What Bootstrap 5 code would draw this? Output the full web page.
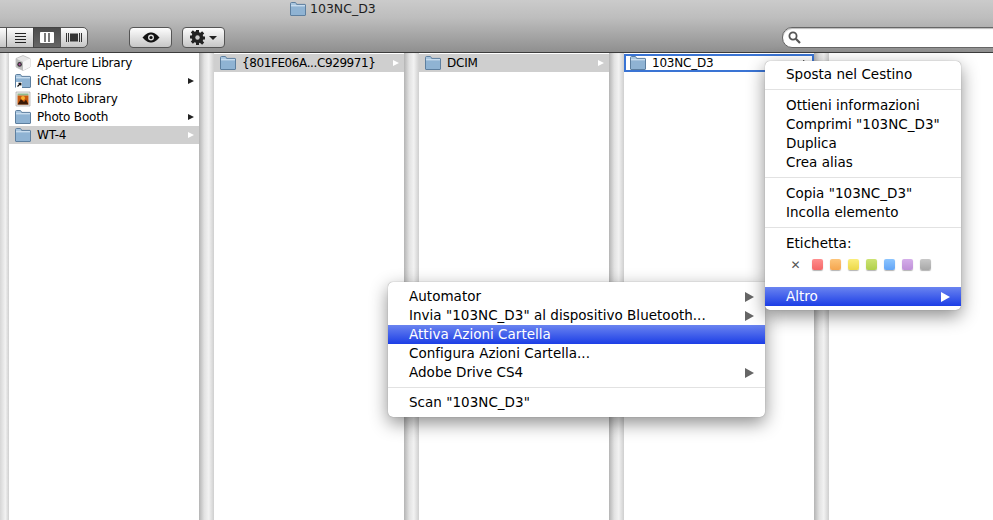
<!DOCTYPE html>
<html lang="it">
<head>
<meta charset="utf-8">
<title>103NC_D3</title>
<link href="https://cdn.jsdelivr.net/npm/bootstrap@5.3.0/dist/css/bootstrap.min.css" rel="stylesheet">
<style>
html,body{height:100%;overflow:hidden}
body{width:993px;height:520px;background:#fff;font-family:"DejaVu Sans","Liberation Sans",sans-serif;font-size:12px;color:#000;position:relative}
.tbar{height:53px;background:linear-gradient(#cbcbcb,#bdbdbd 35%,#8f8f8f);border-bottom:1px solid #3c3c3c;flex:none}
.wtitle{height:17px;padding-left:290px;font-size:12.5px;line-height:17px;color:#1c1c1c;gap:4px}
.wtools{padding-top:10px;height:35px}
.seg{margin-left:-22px;margin-right:41px;height:21px}
.seg .btn,.tool{height:21px;padding:0;border:1px solid #555;border-radius:0;background:linear-gradient(#fdfdfd,#c6c6c6);display:flex;align-items:center;justify-content:center}
.seg .btn{width:28px}
.seg .btn:first-child{width:29px}
.seg .btn:last-child{border-radius:0 5px 5px 0;width:28px}
.seg .btn.on{background:linear-gradient(#4b4b4b,#666);border-color:#444}
.tool{border-radius:4px;width:43px}
.tool-gear{margin-left:10px;gap:4px}
.caretd{width:0;height:0;border:4px solid transparent;border-top:4px solid #222;border-bottom:0}
.srch{width:240px;height:21px;margin-left:auto;margin-right:-29px;background:#fff;border:1px solid #666;border-radius:10px 0 0 10px;padding-left:5px;box-shadow:inset 0 1px 1px #bbb}
.panes{height:467px}
.gut{flex:none;background:linear-gradient(90deg,#b4b4b4,#e2e2e2 35%,#f2f2f2 65%,#cfcfcf)}
.gut-a{width:9px;background:linear-gradient(90deg,#d6d6d6,#f2f2f2 60%,#cfcfcf)}
.gut-b{width:15px}
.pane{width:190px;flex:none;background:#fff;padding-top:1px}
.pane-end{flex:1 1 auto;background:#fff}
.frow{height:18px;padding-left:6px;padding-right:5px;gap:6px;white-space:nowrap;font-size:12px;letter-spacing:-.2px;line-height:18px}
.frow.sel{background:#cfcfcf}
.frow.foc{height:18px;border:2px solid #3a74d4;padding-left:4px;padding-right:3px}
.frow svg{flex:none}
.snug{letter-spacing:-.4px}
.tri{width:0;height:0;margin-left:auto;border-left:6px solid #222;border-top:3.5px solid transparent;border-bottom:3.5px solid transparent}
.tri.lite{border-left-color:#fff}
.dropdown-menu.osx{position:absolute;display:block;margin:0;padding:4px 0;min-width:0;background:#fff;border:0;box-shadow:0 0 1px #777,0 6px 18px rgba(0,0,0,.45);font-size:13.5px;letter-spacing:.02px;z-index:5}
.dropdown-menu.osx-a{left:765px;top:61px;width:196px;border-radius:5px}
.dropdown-menu.osx-b{left:388px;top:282px;width:377px;padding-top:5px;padding-bottom:5px;border-radius:5px 0 5px 5px;z-index:4}
.osx .dropdown-item{height:19px;padding:0 11px 0 21px;line-height:19px;color:#000;display:flex;align-items:center;white-space:nowrap;background:none}
.osx .dropdown-item.active{color:#fff;background:linear-gradient(#6a84f0,#1c3ee6)}
.osx .dropdown-divider{margin:5px 0 6px;height:1px;border-top:1px solid #e2e2e2}
.osx-b .dropdown-divider{margin:5px 0}
.osx .tri{border-left-color:#666;border-left-width:9px;border-top-width:5px;border-bottom-width:5px}
.osx .active .tri{border-left-color:#fff}
.labels{height:34px;padding-left:25px;padding-top:6px}
.xmark{width:11px;font-size:12px;color:#555;margin-right:11px;line-height:12px;text-align:center;font-weight:700}
.swatch{width:11px;height:11px;margin-right:7px;border-radius:2px;box-shadow:0 1px 1px rgba(0,0,0,.3)}
.sw1{background:linear-gradient(#ff8e8e,#f46767)}
.sw2{background:linear-gradient(#fdc57a,#f5a64f)}
.sw3{background:linear-gradient(#fbee7c,#ecd84a)}
.sw4{background:linear-gradient(#cde374,#b0d04c)}
.sw5{background:linear-gradient(#8cc5ff,#63a5f6)}
.sw6{background:linear-gradient(#d5aeea,#bf90d8)}
.sw7{background:linear-gradient(#c8c8c8,#a8a8a8)}
</style>
</head>
<body>
<svg width="0" height="0" class="position-absolute">
<defs>
<symbol id="folder" viewBox="0 0 16 14">
<path d="M.5 3V1.600C.5 1 .9.500 1.500.500h3.600c.5 0 .8.300 1 .7L6.600 2.400H15c.3 0 .5.200.5.500V13c0 .3-.2.500-.5.500H1c-.3 0-.5-.2-.5-.5Z" fill="#a9c6df" stroke="#5d7f9f"/>
<path d="M1 3.600h14V13H1Z" fill="#8fb3d3"/>
<path d="M1 3h14v1.400H1Z" fill="#c7dcee"/>
</symbol>
</defs>
</svg>
<header class="tbar d-flex flex-column">
<div class="wtitle d-flex align-items-center">
<svg width="16" height="14"><use href="#folder"/></svg><span>103NC_D3</span>
</div>
<div class="wtools d-flex align-items-start">
<div class="seg btn-group">
<button class="btn" type="button"></button>
<button class="btn" type="button"><svg width="13" height="10" viewBox="0 0 13 10"><path d="M1 .5h11M1 3.500h11M1 6.500h11M1 9.500h11" stroke="#222"/></svg></button>
<button class="btn on" type="button"><svg width="14" height="11" viewBox="0 0 14 11"><path d="M.5.500h13v10H.5Z" fill="#fff" stroke="#fff"/><path d="M5 1v9M9 1v9" stroke="#444" stroke-width="1.400"/></svg></button>
<button class="btn" type="button"><svg width="16" height="11" viewBox="0 0 16 11"><path d="M.5 1v9M2.500 1v9M13.500 1v9M15.500 1v9" stroke="#333"/><path d="M4 1.500h8v8H4Z" fill="#333"/></svg></button>
</div>
<button class="tool" type="button"><svg width="18" height="11" viewBox="0 0 18 11"><path d="M.5 5.500C4 1.500 6.500.5 9 .5s5 1 8.500 5c-3.500 4-6 5-8.500 5s-5-1-8.500-5Z" fill="#111"/><circle cx="9" cy="5.500" r="3" fill="#ddd"/><circle cx="9" cy="5.500" r="1.600" fill="#111"/></svg></button>
<button class="tool tool-gear" type="button"><svg width="15" height="15" viewBox="0 0 15 15"><path d="M6 0h3v2.200l1.500.6L12.100 1.300l2.100 2.100-1.500 1.600.6 1.500H15v3h-1.700l-.6 1.500 1.500 1.600-2.100 2.100-1.600-1.500L9 12.800V15H6v-2.200l-1.500-.6-1.600 1.500L.8 11.600 2.300 10 1.700 8.500H0v-3h1.700L2.300 4 .8 2.400 2.900.3l1.600 1.500L6 1.200Z" fill="#222"/><circle cx="7.500" cy="7.500" r="2.200" fill="#ccc"/></svg><span class="caretd"></span></button>
<div class="srch d-flex align-items-center"><svg width="13" height="13" viewBox="0 0 13 13"><circle cx="5" cy="5" r="3.600" fill="none" stroke="#555" stroke-width="1.800"/><path d="M7.800 7.800 12 12" stroke="#555" stroke-width="2.200"/></svg></div>
</div>
</header>

<main class="panes d-flex">
<div class="gut gut-a"></div>
<section class="pane">
<div class="frow d-flex align-items-center"><svg width="16" height="16" viewBox="0 0 16 16"><path d="M8 .5 15 3.500V12L8 15.500 1 12V3.500Z" fill="#e6e6e6" stroke="#aaa" stroke-width=".6"/><path d="M1 3.500 8 7v8.500L1 12Z" fill="#bdbdbd"/><path d="M8 7l7-3.500V12l-7 3.500Z" fill="#f7f7f7"/><circle cx="4.600" cy="9.400" r="2.300" fill="#333"/><circle cx="4.600" cy="9.400" r="1.100" fill="#b04ea0"/></svg><span>Aperture Library</span></div>
<div class="frow d-flex align-items-center"><svg width="16" height="14"><use href="#folder"/><path d="M1 8h6v6H1Z" fill="#fff"/><path d="M2.500 12.500 5.500 9.500M3.500 9.300h2.300v2.300" stroke="#111" fill="none" stroke-width="1.200"/></svg><span>iChat Icons</span><i class="tri"></i></div>
<div class="frow d-flex align-items-center"><svg width="16" height="16" viewBox="0 0 16 16"><path d="M1 1h14v14H1Z" fill="#eee" stroke="#999" stroke-width=".6"/><path d="M2.500 2.500h11v2h-11Z" fill="#8fb98a"/><path d="M2.500 4.500h11v9h-11Z" fill="#c95a10"/><path d="M2.500 13.500 6 8l3 3 2-2.500 2.500 5Z" fill="#3a1a08"/><circle cx="8" cy="7" r="2" fill="#f7b030"/></svg><span>iPhoto Library</span></div>
<div class="frow d-flex align-items-center"><svg width="16" height="14"><use href="#folder"/></svg><span>Photo Booth</span><i class="tri"></i></div>
<div class="frow sel d-flex align-items-center"><svg width="16" height="14"><use href="#folder"/></svg><span>WT-4</span><i class="tri lite"></i></div>
</section>
<div class="gut gut-b"></div>
<section class="pane">
<div class="frow sel d-flex align-items-center"><svg width="16" height="14"><use href="#folder"/></svg><span class="snug">{801FE06A...C929971}</span><i class="tri lite"></i></div>
</section>
<div class="gut gut-b"></div>
<section class="pane">
<div class="frow sel d-flex align-items-center"><svg width="16" height="14"><use href="#folder"/></svg><span>DCIM</span><i class="tri lite"></i></div>
</section>
<div class="gut gut-b"></div>
<section class="pane">
<div class="frow foc d-flex align-items-center"><svg width="16" height="14"><use href="#folder"/></svg><span>103NC_D3</span><i class="tri"></i></div>
</section>
<div class="gut gut-b"></div>
<section class="pane-end"></section>
</main>

<div class="dropdown-menu osx osx-a">
<a class="dropdown-item" href="#">Sposta nel Cestino</a>
<div class="dropdown-divider"></div>
<a class="dropdown-item" href="#">Ottieni informazioni</a>
<a class="dropdown-item" href="#">Comprimi "103NC_D3"</a>
<a class="dropdown-item" href="#">Duplica</a>
<a class="dropdown-item" href="#">Crea alias</a>
<div class="dropdown-divider"></div>
<a class="dropdown-item" href="#">Copia "103NC_D3"</a>
<a class="dropdown-item" href="#">Incolla elemento</a>
<div class="dropdown-divider"></div>
<a class="dropdown-item" href="#">Etichetta:</a>
<div class="labels d-flex align-items-start">
<span class="xmark">✕</span><i class="swatch sw1"></i><i class="swatch sw2"></i><i class="swatch sw3"></i><i class="swatch sw4"></i><i class="swatch sw5"></i><i class="swatch sw6"></i><i class="swatch sw7"></i>
</div>
<a class="dropdown-item active" href="#">Altro<i class="tri"></i></a>
</div>

<div class="dropdown-menu osx osx-b">
<a class="dropdown-item" href="#">Automator<i class="tri"></i></a>
<a class="dropdown-item" href="#">Invia "103NC_D3" al dispositivo Bluetooth...<i class="tri"></i></a>
<a class="dropdown-item active" href="#">Attiva Azioni Cartella</a>
<a class="dropdown-item" href="#">Configura Azioni Cartella...</a>
<a class="dropdown-item" href="#">Adobe Drive CS4<i class="tri"></i></a>
<div class="dropdown-divider"></div>
<a class="dropdown-item" href="#">Scan "103NC_D3"</a>
</div>
<script src="https://cdn.jsdelivr.net/npm/bootstrap@5.3.0/dist/js/bootstrap.bundle.min.js"></script>
</body>
</html>
